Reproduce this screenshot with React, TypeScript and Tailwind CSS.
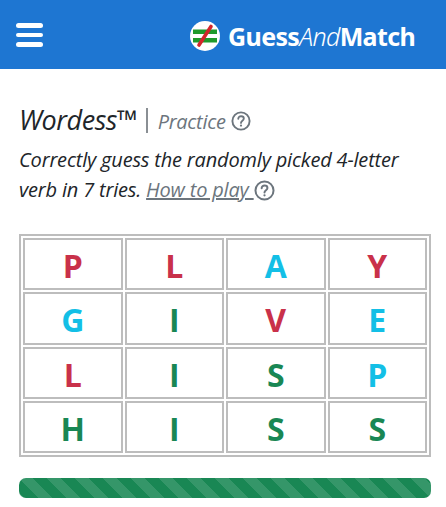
const rows: [string, string][][] = [
  [["P", "r"], ["L", "r"], ["A", "c"], ["Y", "r"]],
  [["G", "c"], ["I", "g"], ["V", "r"], ["E", "c"]],
  [["L", "r"], ["I", "g"], ["S", "g"], ["P", "c"]],
  [["H", "g"], ["I", "g"], ["S", "g"], ["S", "g"]],
];

function Help({ className }: { className: string }) {
  return (
    <svg viewBox="0 0 20 20" className={className} fill="none" stroke="currentColor">
      <circle cx="10" cy="10" r="8.6" strokeWidth="1.9" />
      <path d="M7.3 7.8c0-1.6 1.2-2.6 2.8-2.6s2.7 1 2.7 2.3c0 2.2-2.8 2.2-2.8 4.4" strokeWidth="1.9" strokeLinecap="round" />
      <circle cx="10" cy="14.6" r="1.1" fill="currentColor" stroke="none" />
    </svg>
  );
}

function Logo() {
  return (
    <svg viewBox="0 0 30 30" className="w-[30px] h-[30px] shrink-0">
      <circle cx="15" cy="15" r="15" fill="#fff" />
      <rect x="3" y="8.5" width="24" height="4.5" fill="#1f9a2c" />
      <rect x="3" y="17" width="24" height="4.5" fill="#1f9a2c" />
      <path d="M21 5.5 L9 24" stroke="#d3262c" strokeWidth="3.6" strokeLinecap="round" />
    </svg>
  );
}

export default function App() {
  return (
    <div className="w-[446px] h-[507px] overflow-hidden bg-white font-['Open_Sans','Noto_Sans',sans-serif] text-[#212529]">
      <header className="h-[69px] pt-[3px] bg-[#1e76d2] flex items-center justify-between pl-[16px] pr-[31px]">
        <div className="w-[27px] flex flex-col gap-[5px] -mt-[2px]">
          <div className="h-[4.5px] rounded-full bg-white" />
          <div className="h-[4.5px] rounded-full bg-white" />
          <div className="h-[4.5px] rounded-full bg-white" />
        </div>
        <div className="flex items-center gap-[8px]">
          <Logo />
          <div className="text-[25px] leading-none text-white font-bold tracking-[-0.65px] font-['Noto_Sans',sans-serif]">
            Guess<span className="font-light italic">And</span>Match
          </div>
        </div>
      </header>

      <main className="pl-[19px] pr-[15px]">
        <div className="mt-[32px] flex items-center h-[36px]">
          <span className="text-[27px] italic leading-none tracking-[-0.45px] text-[#212529]">Wordess™</span>
          <span className="ml-[9px] mr-[10px] w-[1.5px] h-[25px] bg-[#8a8f94] mt-[3px]" />
          <span className="mt-[5px] text-[20px] italic leading-none text-[#6c757d] tracking-[-0.3px]">Practice</span>
          <Help className="mt-[4px] ml-[5px] w-[20px] h-[20px] text-[#6c757d]" />
        </div>
        <p className="mt-[8px] text-[20px] italic leading-[30px] tracking-[-0.18px] text-[#212529] whitespace-nowrap">
          Correctly guess the randomly picked 4-letter
          <br />
          verb in 7 tries.{" "}
          <a className="text-[#6c757d] underline">How to play </a>
          <Help className="inline-block align-[-4px] w-[21px] h-[21px] text-[#6c757d]" />
        </p>

        <table className="mt-[29px] w-[412px] table-fixed border-separate border-spacing-[2px] border-2 border-[#bdbdbd]">
          <tbody>
            {rows.map((row, i) => (
              <tr key={i}>
                {row.map(([ch, c], j) => (
                  <td
                    key={j}
                    className={
                      "h-[52.25px] p-0 pt-[4px] text-center align-middle border-2 border-[#bdbdbd] text-[32px] leading-none font-bold " +
                      (c === "r" ? "text-[#c9314a]" : c === "c" ? "text-[#13bfe6]" : "text-[#198754]")
                    }
                  >
                    {ch}
                  </td>
                ))}
              </tr>
            ))}
          </tbody>
        </table>

        <div className="mt-[21px] h-[20px] rounded-[7px] bg-[#198754] bg-[linear-gradient(45deg,rgba(255,255,255,0.12)_25%,transparent_25%,transparent_50%,rgba(255,255,255,0.12)_50%,rgba(255,255,255,0.12)_75%,transparent_75%,transparent)] bg-[length:28px_28px]" />
      </main>
    </div>
  );
}
